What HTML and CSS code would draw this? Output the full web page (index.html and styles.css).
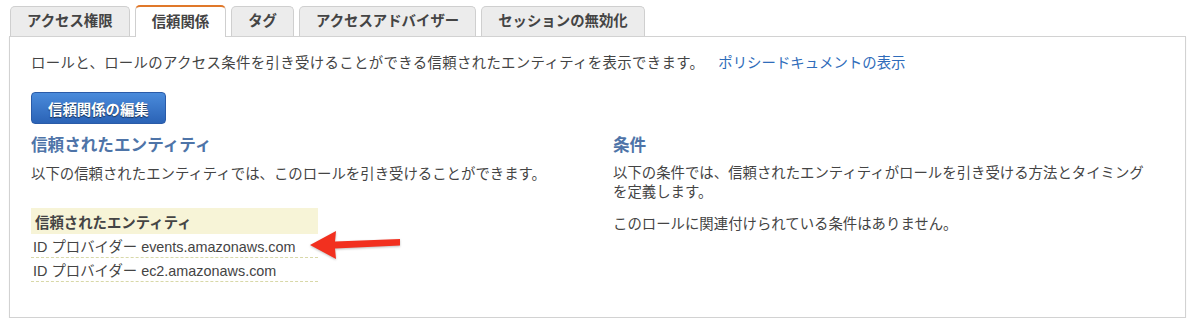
FILE: index.html
```html
<!DOCTYPE html>
<html>

<head>
    <meta charset="utf-8">
    <title>信頼関係</title>
    <link rel="stylesheet" href="styles.css">
</head>

<body>
    <div class="page">
        <ul class="tabs">
            <li class="tab">アクセス権限</li>
            <li class="tab active">信頼関係</li>
            <li class="tab">タグ</li>
            <li class="tab">アクセスアドバイザー</li>
            <li class="tab">セッションの無効化</li>
        </ul>

        <div class="panel">
            <p class="intro">ロールと、ロールのアクセス条件を引き受けることができる信頼されたエンティティを表示できます。<a href="#" class="doc-link">ポリシードキュメントの表示</a></p>

            <button class="btn-primary">信頼関係の編集</button>

            <div class="columns">
                <div class="col">
                    <h3 class="col-title">信頼されたエンティティ</h3>
                    <p class="col-text">以下の信頼されたエンティティでは、このロールを引き受けることができます。</p>
                    <table class="entity-table">
                        <thead>
                            <tr><th>信頼されたエンティティ</th></tr>
                        </thead>
                        <tbody>
                            <tr><td>ID プロバイダー events.amazonaws.com</td></tr>
                            <tr><td>ID プロバイダー ec2.amazonaws.com</td></tr>
                        </tbody>
                    </table>
                </div>

                <div class="col col-right">
                    <h3 class="col-title">条件</h3>
                    <p class="col-text">以下の条件では、信頼されたエンティティがロールを引き受ける方法とタイミングを定義します。</p>
                    <p class="col-text note">このロールに関連付けられている条件はありません。</p>
                </div>
            </div>
        </div>

        <!-- annotation arrow -->
        <svg class="callout-arrow" width="100" height="34" viewBox="0 0 100 34">
            <polygon points="5,17 31,3 30,13.5 95,11 95,17.5 30,20.5 31,31" fill="#f2301f"></polygon>
        </svg>
    </div>
</body>

</html>
```

FILE: styles.css
```css
body {
    margin: 0;
    font-family: "Liberation Sans", "Noto Sans CJK JP", sans-serif;
    font-size: 14.4px;
    color: #444;
    background: #fff;
}

.page {
    position: relative;
    padding: 5px 14px 0 9px;
}

.tabs {
    display: flex;
    align-items: flex-end;
    gap: 5px;
    list-style: none;
    margin: 0 0 0 1px;
    padding: 0;
}

.tab {
    padding: 0 16px;
    line-height: 29px;
    font-weight: bold;
    color: #444;
    background: #ececec;
    border: 1px solid #cfcfcf;
    border-bottom: none;
    border-radius: 5px 5px 0 0;
}

.tab.active {
    position: relative;
    line-height: 30px;
    margin-bottom: -1px;
    background: #fff;
    border-top: 2px solid #e0782a;
}

.panel {
    border: 1px solid #d2d2d2;
    box-shadow: 0 1px 1px rgba(0, 0, 0, 0.08);
    padding: 16px 21px 35px 21px;
}

.intro {
    margin: 0;
    line-height: 20px;
    letter-spacing: 0.35px;
}

.doc-link {
    margin-left: 14px;
    color: #2f6cba;
    text-decoration: none;
    letter-spacing: 0;
}

.btn-primary {
    display: block;
    margin-top: 19px;
    height: 32px;
    padding: 0 16px;
    font-family: inherit;
    font-size: 14.4px;
    font-weight: bold;
    color: #fff;
    text-shadow: 0 1px 1px rgba(0, 0, 0, 0.6);
    background: linear-gradient(#4a8bdb, #2b63b6);
    border: 1px solid #2a5ba8;
    border-radius: 4px;
}

.columns {
    display: grid;
    grid-template-columns: 582px 542px;
}

.col-title {
    margin: 11px 0 8px;
    font-size: 16.6px;
    font-weight: 600;
    line-height: 22px;
    color: #4e74a8;
}

.col-text {
    margin: 0;
    line-height: 19px;
}

.col-right .col-text {
    margin-top: -1px;
}

.col-right .note {
    margin-top: 13px;
}

.entity-table {
    margin-top: 24px;
    width: 287px;
    border-collapse: collapse;
}

.entity-table th {
    height: 26px;
    padding: 0 4px;
    text-align: left;
    font-weight: bold;
    background: #f7f4d7;
}

.entity-table td {
    height: 23px;
    padding: 0 2px;
    border-bottom: 1px dashed #d8d8a8;
}

.callout-arrow {
    position: absolute;
    left: 305px;
    top: 228px;
    filter: drop-shadow(0 1px 1px rgba(0, 0, 0, 0.25));
}
```
